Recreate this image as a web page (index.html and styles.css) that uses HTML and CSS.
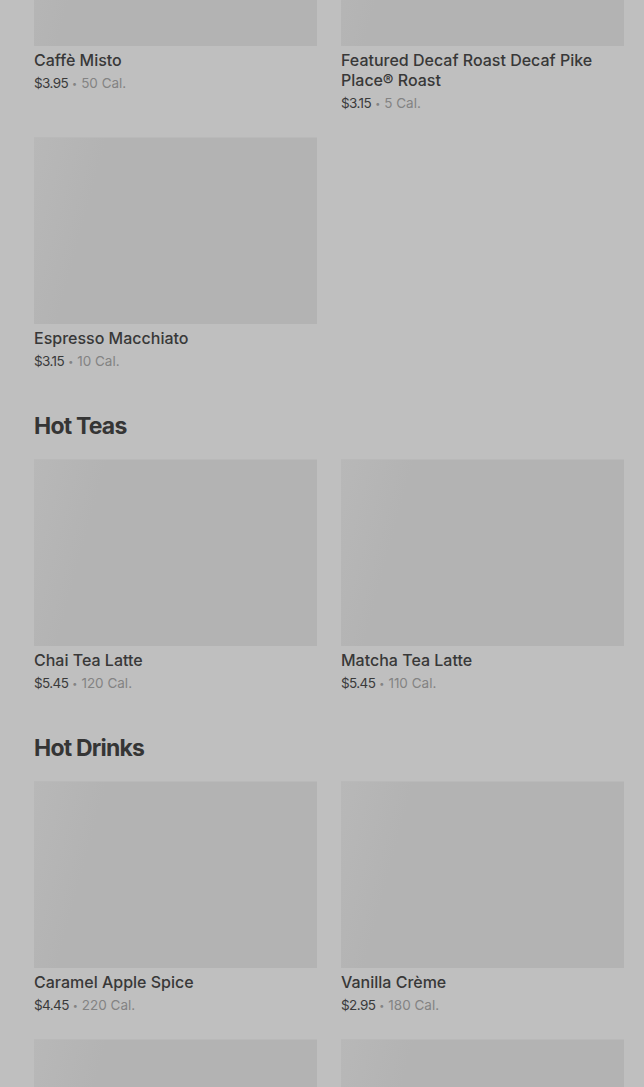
FILE: index.html
```html
<!DOCTYPE html>
<html lang="en">
<head>
  <meta charset="UTF-8" />
  <meta name="viewport" content="width=device-width, initial-scale=1.0" />
  <title>Menu</title>
  <link rel="stylesheet" href="styles.css">
</head>
<body>
  <main class="menu">
    <section class="section first">
      <div class="grid">
        <div class="item">
          <div class="thumb"></div>
          <div class="name">Caffè Misto</div>
          <div class="meta"><span class="price">$3.95</span><span class="dot">•</span>50 Cal.</div>
        </div>
        <div class="item">
          <div class="thumb"></div>
          <div class="name">Featured Decaf Roast Decaf Pike Place® Roast</div>
          <div class="meta"><span class="price">$3.15</span><span class="dot">•</span>5 Cal.</div>
        </div>
        <div class="item">
          <div class="thumb"></div>
          <div class="name">Espresso Macchiato</div>
          <div class="meta"><span class="price">$3.15</span><span class="dot">•</span>10 Cal.</div>
        </div>
      </div>
    </section>

    <section class="section">
      <h2>Hot Teas</h2>
      <div class="grid">
        <div class="item">
          <div class="thumb"></div>
          <div class="name">Chai Tea Latte</div>
          <div class="meta"><span class="price">$5.45</span><span class="dot">•</span>120 Cal.</div>
        </div>
        <div class="item">
          <div class="thumb"></div>
          <div class="name">Matcha Tea Latte</div>
          <div class="meta"><span class="price">$5.45</span><span class="dot">•</span>110 Cal.</div>
        </div>
      </div>
    </section>

    <section class="section">
      <h2>Hot Drinks</h2>
      <div class="grid">
        <div class="item">
          <div class="thumb"></div>
          <div class="name">Caramel Apple Spice</div>
          <div class="meta"><span class="price">$4.45</span><span class="dot">•</span>220 Cal.</div>
        </div>
        <div class="item">
          <div class="thumb"></div>
          <div class="name">Vanilla Crème</div>
          <div class="meta"><span class="price">$2.95</span><span class="dot">•</span>180 Cal.</div>
        </div>
        <!-- next row, only its top edge is on screen -->
        <div class="item">
          <div class="thumb"></div>
        </div>
        <div class="item">
          <div class="thumb"></div>
        </div>
      </div>
    </section>
  </main>
</body>
</html>
```

FILE: styles.css
```css
* { box-sizing: border-box; }
html, body {
  height: 100%;
  overflow: hidden;
}
body {
  margin: 0;
  background: #bfbfbf;
  font-family: Inter, "Noto Sans", sans-serif;
  color: #333333;
}
.menu {
  padding: 0 20px 0 34px;
  margin-top: -141px;
}
.section h2 {
  margin: 39px 0 17px;
  font-size: 23px;
  line-height: 32px;
  font-weight: 700;
  letter-spacing: -0.8px;
  color: #353535;
}
.grid {
  display: grid;
  grid-template-columns: 1fr 1fr;
  column-gap: 24px;
  row-gap: 24px;
  align-items: start;
}
.thumb {
  height: 187px;
  background: linear-gradient(105deg, #b8b8b8 0%, #b3b3b3 22%, #b3b3b3 100%);
  box-shadow: inset 0 1px 0 #b9b9b9;
}
.name {
  margin-top: 4px;
  font-size: 16px;
  line-height: 20px;
  font-weight: 500;
  color: #383838;
}
.meta {
  margin-top: 3px;
  height: 20px;
  font-size: 13.5px;
  line-height: 20px;
  color: #838383;
}
.price {
  color: #3a3a3a;
  letter-spacing: -0.6px;
}
.dot {
  font-size: 9px;
  line-height: 0;
  margin: 0 4px;
  vertical-align: 1px;
}
```
